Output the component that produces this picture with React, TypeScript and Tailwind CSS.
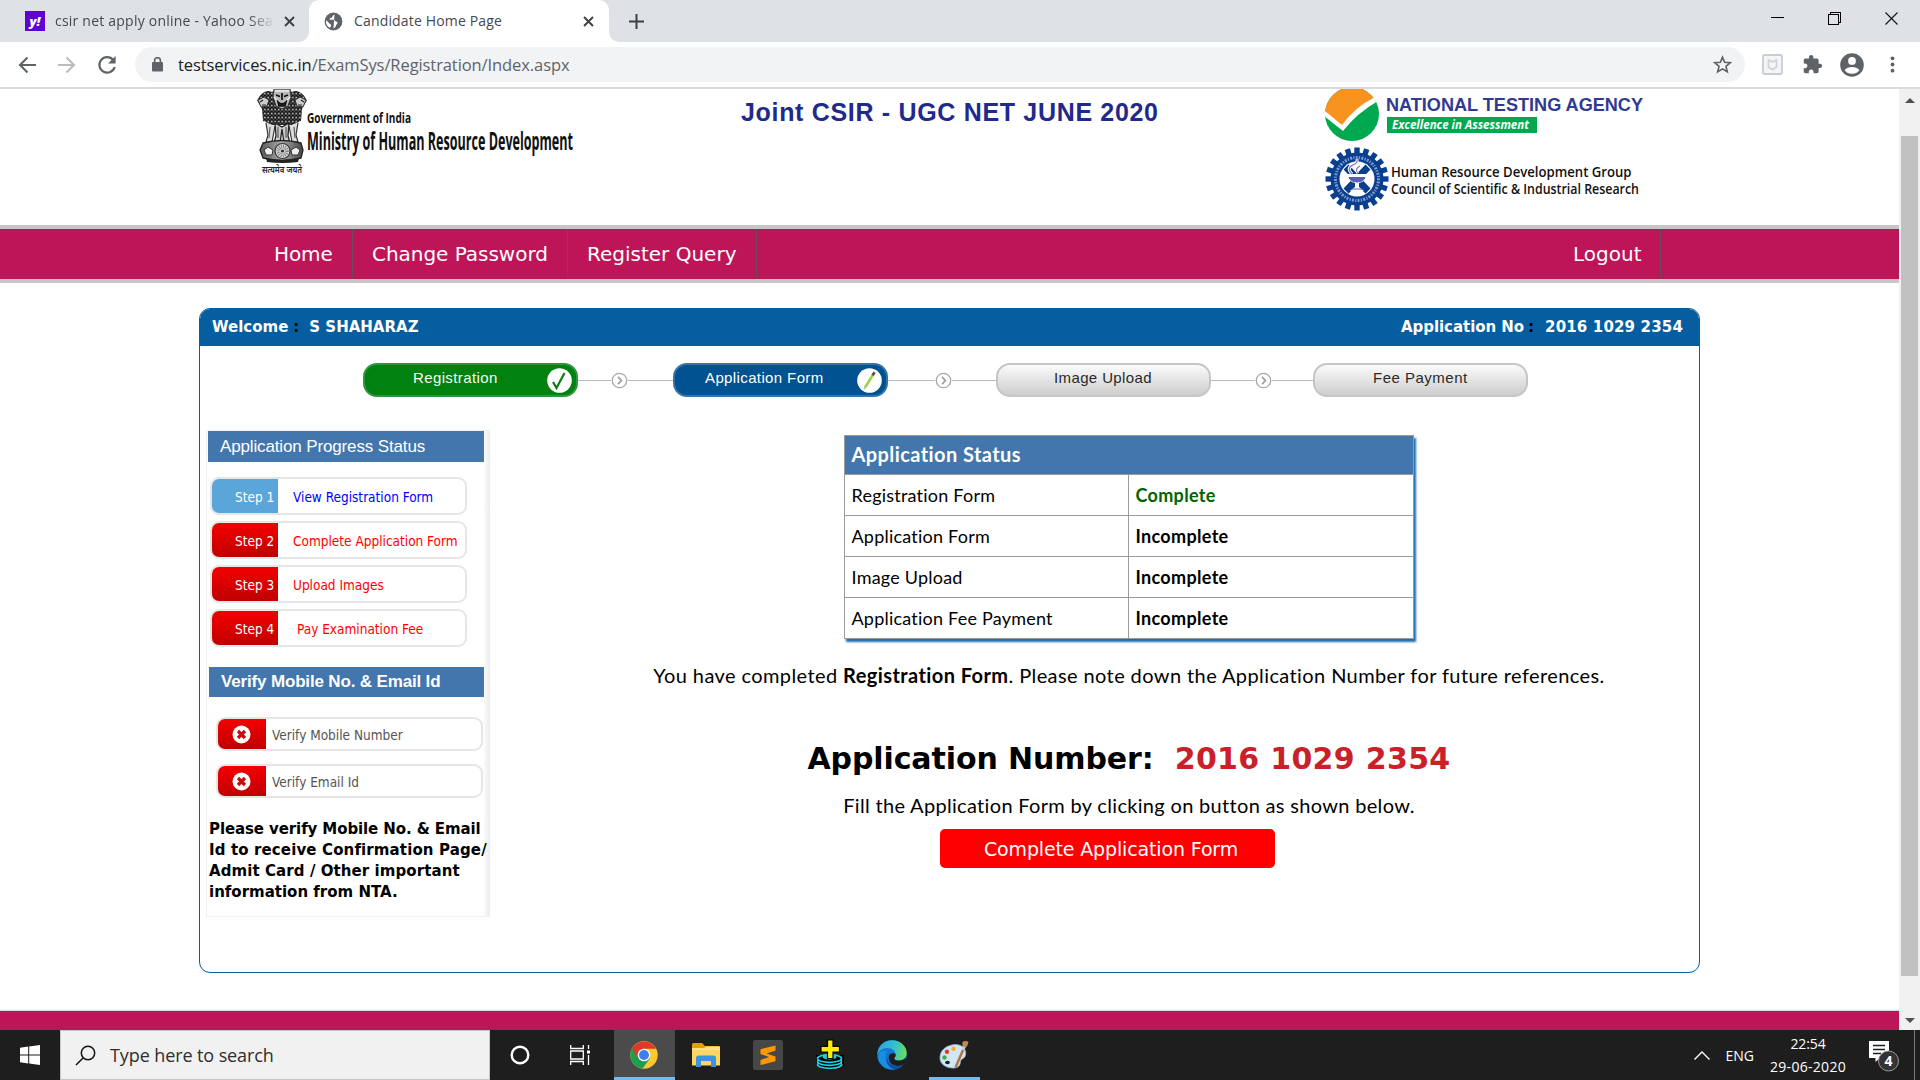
import type { ReactNode } from "react";

const UI = "font-['Open_Sans',sans-serif]";
const VERDANA = "font-['DejaVu_Sans',sans-serif]";
const TAHOMA = "font-['DejaVu_Sans_Condensed','DejaVu_Sans',sans-serif]";
const ARIAL = "font-['Liberation_Sans',sans-serif]";
const CALIBRI = "font-['Lato',sans-serif]";

/* ---------- browser chrome ---------- */

function CloseX() {
  return (
    <svg width="11" height="11" viewBox="0 0 11 11" className="shrink-0">
      <path d="M1 1l9 9M10 1l-9 9" stroke="#3c4043" strokeWidth="1.9" />
    </svg>
  );
}

function GlobeIcon() {
  return (
    <svg width="19" height="19" viewBox="0 0 19 19" className="shrink-0">
      <circle cx="9.5" cy="9.5" r="8.9" fill="#5f6368" />
      <path d="M10.500 2.300L8.600 3.900c-.5.500-.1 1.200-.7 1.600-.9.500-2 .4-2.300 1.300-.2.800.4 1.100 1.200 1h3c1.200.2.900 1.500 2 1.600 1.100.1 1.900.5 1.700 1.500-.2 1.100-1.300 1.200-1.400 2.300-.1 1.200-1.300 2.900-3.300 3.100-1.500 0-2.700-.4-3.400-.9 1.300-.3 1.700-1.200 1.600-2.200-.2-1.300-1.700-1.500-2.500-2.500L2 8.600c-.3 5 3 8 7.500 8" fill="#fff" />
      <path d="M2.300 8.200l3 3.200c.8.700 1.800 1 1.800 2 0 .9-.5 1.500-1.300 2A7.500 7.500 0 0 1 2.300 8.200z" fill="#fff" />
    </svg>
  );
}

function TabStrip() {
  return (
    <div className={`flex h-[42px] items-stretch bg-[#dee1e6] text-[14px] text-[#45494d] ${UI}`}>
      <div className="flex w-[299px] items-center pl-[25px]">
        <div className="flex h-5 w-5 items-center justify-center bg-[#5f01d1] text-[13px] font-extrabold italic leading-none text-white">
          y!
        </div>
        <div className="ml-[10px] w-[220px] overflow-hidden whitespace-nowrap pb-px [mask-image:linear-gradient(to_right,#000_88%,transparent)]">
          <span className="tracking-[0.22px]">csir net apply online - Yahoo Sear</span>
        </div>
        <span className="ml-[9px]">
          <CloseX />
        </span>
      </div>
      <div className="flex w-[10px] items-end bg-white">
        <div className="h-full w-full rounded-br-[10px] bg-[#dee1e6]" />
      </div>
      <div className="bg-[#dee1e6]">
        <div className="flex h-full w-[300px] items-center rounded-t-[10px] bg-white pl-[15px]">
          <GlobeIcon />
          <span className="ml-[11px] pb-px tracking-[0.16px]">Candidate Home Page</span>
          <span className="ml-auto mr-[15px]">
            <CloseX />
          </span>
        </div>
      </div>
      <div className="w-[10px] bg-white">
        <div className="h-full w-full rounded-bl-[10px] bg-[#dee1e6]" />
      </div>
      <div className="ml-[10px] flex items-center">
        <svg width="15" height="15" viewBox="0 0 15 15">
          <path d="M7.500 0v15M0 7.500h15" stroke="#3c4043" strokeWidth="2" />
        </svg>
      </div>
      <div className="ml-auto mr-[22px] flex items-center gap-[44px] pb-[6px]">
        <svg width="13" height="13" viewBox="0 0 13 13">
          <path d="M0 5.500h13" stroke="#000" strokeWidth="1" />
        </svg>
        <svg width="13" height="13" viewBox="0 0 13 13" shapeRendering="crispEdges">
          <path d="M.5 2.500h10v10H.5zM2.500 2V.5h10v10H11" fill="none" stroke="#000" />
        </svg>
        <svg width="13" height="13" viewBox="0 0 13 13">
          <path d="M.5.5l12 12M12.500.5l-12 12" stroke="#111" strokeWidth="1.100" />
        </svg>
      </div>
    </div>
  );
}

function Toolbar() {
  return (
    <div className="flex h-[47px] items-center border-b-2 border-[#d9dbe1] bg-white">
      <div className="flex items-center gap-[20px] pl-[17px]">
        <svg width="20" height="20" viewBox="0 0 20 20" fill="none" stroke="#5f6368" strokeWidth="2.100">
          <path d="M19 10H3M10.500 2.500L3 10l7.500 7.500" />
        </svg>
        <svg width="20" height="20" viewBox="0 0 20 20" fill="none" stroke="#babcbe" strokeWidth="2.100">
          <path d="M1 10h16M9.500 2.500L17 10l-7.500 7.500" />
        </svg>
        <svg width="20" height="20" viewBox="0 0 20 20" fill="none">
          <path d="M16.300 5A7.800 7.800 0 1 0 17.700 12" stroke="#5f6368" strokeWidth="2.200" />
          <path d="M18.600 1v7.600H11z" fill="#5f6368" />
        </svg>
      </div>
      <div className={`ml-[18px] flex h-[35px] w-[1610px] items-center rounded-full bg-[#f1f3f4] pl-[17px] text-[16.5px] ${UI}`}>
        <svg width="11" height="15" viewBox="0 0 11 15">
          <rect x="0" y="5" width="11" height="9.500" rx="1" fill="#5f6368" />
          <path d="M2.600 6V3.600a2.900 2.900 0 0 1 5.800 0V6" fill="none" stroke="#5f6368" strokeWidth="1.600" />
        </svg>
        <span className="ml-[15px] pt-px tracking-[-0.09px] text-[#202124]">
          testservices.nic.in<span className="text-[#5f6368]">/ExamSys/Registration/Index.aspx</span>
        </span>
        <svg width="19" height="19" viewBox="0 0 24 24" className="ml-auto mr-[13px]">
          <path
            d="M12 2.800l2.700 6.400 6.900.6-5.200 4.500 1.600 6.800-6-3.600-6 3.600 1.600-6.800-5.200-4.500 6.900-.6z"
            fill="none"
            stroke="#5f6368"
            strokeWidth="2.100"
          />
        </svg>
      </div>
      <svg width="21" height="21" viewBox="0 0 21 21" className="ml-[17px]">
        <rect x="1" y="1" width="19" height="19" rx="1.500" fill="#f4f5f6" stroke="#c9cdd2" strokeWidth="1.800" />
        <path d="M6.500 6l4 2 4-2v7.200l-4 2.300-4-2.300z" fill="none" stroke="#cfd3d7" strokeWidth="1.700" />
      </svg>
      <svg width="21" height="21" viewBox="0 0 24 24" className="ml-[19px]" fill="#5f6368">
        <path d="M20.500 11H19V7c0-1.100-.9-2-2-2h-4V3.500a2.500 2.500 0 0 0-5 0V5H4c-1.100 0-2 .9-2 2v3.800h1.500c1.500 0 2.700 1.200 2.700 2.700S5 16.200 3.500 16.200H2V20c0 1.100.9 2 2 2h3.800v-1.500c0-1.500 1.200-2.700 2.700-2.700s2.700 1.200 2.700 2.700V22H17c1.100 0 2-.9 2-2v-4h1.500a2.500 2.500 0 0 0 0-5z" />
      </svg>
      <svg width="24" height="24" viewBox="0 0 24 24" className="ml-[17px]">
        <circle cx="12" cy="12" r="11.800" fill="#5f6368" />
        <circle cx="12" cy="7.900" r="3.900" fill="#fff" />
        <path d="M4.600 17.300c1.500-2.400 4.600-3.400 7.400-3.400s5.900 1 7.400 3.400A9 9 0 0 1 12 20.800a9 9 0 0 1-7.400-3.500z" fill="#fff" />
      </svg>
      <svg width="5" height="17" viewBox="0 0 5 17" className="ml-[26px]" fill="#5f6368">
        <circle cx="2.500" cy="2.300" r="1.900" />
        <circle cx="2.500" cy="8.500" r="1.900" />
        <circle cx="2.500" cy="14.700" r="1.900" />
      </svg>
    </div>
  );
}

/* ---------- logos ---------- */

function Emblem() {
  return (
    <svg width="52" height="86" viewBox="0 0 52 86" className="shrink-0">
      <defs>
        <pattern id="fur" width="3.500" height="4" patternUnits="userSpaceOnUse">
          <rect width="3.500" height="4" fill="#777" />
          <path d="M0 0l1.750 3L3.500 0M0 4l1-1.500M3.500 4l-1-1.500" stroke="#111" strokeWidth=".9" fill="none" />
          <path d="M1.750 0v1.200" stroke="#eee" strokeWidth=".9" />
        </pattern>
        <linearGradient id="stone" x1="0" x2="1">
          <stop offset="0" stopColor="#555" />
          <stop offset=".5" stopColor="#aaa" />
          <stop offset="1" stopColor="#444" />
        </linearGradient>
      </defs>
      <path d="M16 3C10 0 4 5 1 12l3 4 2 4 1 12 9 4 20 0 9-4 1-12 2-4 3-4C48 5 42 0 36 3l-4-3H20z" fill="url(#fur)" />
      <path d="M2 11l6-3 5 3-2 6-6 1zM50 11l-6-3-5 3 2 6 6 1z" fill="#ccc" stroke="#333" strokeWidth="1" />
      <path d="M4 13l3-2M48 13l-3-2M6 16h4M46 16h-4" stroke="#222" strokeWidth="1.200" />
      <path d="M18 0h16l1 8-3 9-6 3-6-3-3-9z" fill="#b8b8b8" stroke="#333" strokeWidth="1" />
      <path d="M20 6l4 1.500M32 6l-4 1.500M26 4v7M22 13q4 4 8 0l-1 4h-6z" stroke="#111" strokeWidth="1.700" fill="#333" />
      <path d="M19 2h14M18 8l3 3M34 8l-3 3" stroke="#eee" strokeWidth="1.300" />
      <path d="M10 34l2 12-2 7h6l3-16M42 34l-2 12 2 7h-6l-3-16" fill="#ddd" stroke="#333" strokeWidth="1.200" />
      <path d="M19 34l1 13-2 7h6l2-14 2 14h6l-2-7 1-13-7 4z" fill="#ccc" stroke="#222" strokeWidth="1.300" />
      <path d="M22 38v11M30 38v11M14 38l-1 11M38 38l1 11" stroke="#666" strokeWidth="1.300" />
      <path d="M7 54q19-5 38 0l2 7-2 8q-19 5-38 0l-3-8z" fill="url(#stone)" stroke="#222" strokeWidth="1.300" />
      <path d="M8 61l4-3 5 3-1 5h-6zM44 61l-4-3-5 3 1 5h6z" fill="#eee" stroke="#333" />
      <circle cx="26.500" cy="62" r="7.500" fill="#ddd" stroke="#333" strokeWidth="1.200" />
      <circle cx="26.500" cy="62" r="4.200" fill="none" stroke="#777" strokeWidth="4" strokeDasharray=".8 1" />
      <circle cx="26.500" cy="62" r="1.600" fill="#333" />
      <path d="M10 69q16 4 33 0l-1 4q-15 2-31 0z" fill="#222" />
      <text x="6" y="83.500" fontSize="9" fontWeight="600" textLength="40" lengthAdjust="spacingAndGlyphs" fill="#222" fontFamily="Noto Sans, sans-serif">
        सत्यमेव जयते
      </text>
    </svg>
  );
}

function MinistryLogo() {
  return (
    <div className="flex">
      <Emblem />
      <svg width="290" height="86" viewBox="0 0 290 86" className="-ml-[2px]" fill="#111" fontFamily="Open Sans, sans-serif">
        <text x="1" y="34" fontSize="14.500" fontWeight="700" textLength="104" lengthAdjust="spacingAndGlyphs">
          Government of India
        </text>
        <text x="1" y="60.500" fontSize="25" fontWeight="700" textLength="266" lengthAdjust="spacingAndGlyphs">
          Ministry of Human Resource Development
        </text>
      </svg>
    </div>
  );
}

function NtaLogo() {
  return (
    <svg width="340" height="54" viewBox="0 0 340 54">
      <defs>
        <clipPath id="nta">
          <circle cx="27" cy="25" r="27" />
        </clipPath>
      </defs>
      <g clipPath="url(#nta)">
        <rect width="54" height="54" y="-2" fill="#00a850" />
        <path d="M-2 -4h58L48 9Q30 19 17 38L-2 24z" fill="#f7931e" />
        <path d="M0 22l17 14Q30 18 50 8l3 4Q32 24 18 42L-1 27z" fill="#fff" />
      </g>
      <text x="61" y="22.300" fontSize="18" fontWeight="700" fill="#2f3a92" textLength="257" lengthAdjust="spacingAndGlyphs" fontFamily="Liberation Sans, sans-serif">
        NATIONAL TESTING AGENCY
      </text>
      <rect x="62" y="28" width="150" height="16" fill="#00a850" />
      <text x="67" y="39.800" fontSize="12" fontWeight="700" fontStyle="italic" fill="#fff" textLength="137" lengthAdjust="spacingAndGlyphs" fontFamily="Open Sans, sans-serif">
        Excellence in Assessment
      </text>
    </svg>
  );
}

const teeth = Array.from({ length: 20 }, (_, i) => i * 18);

function CsirLogo() {
  return (
    <svg width="340" height="64" viewBox="0 0 340 64">
      <g transform="translate(32 32)">
        {teeth.map((a) => (
          <rect key={a} x="-2.700" y="-31.500" width="5.400" height="8" fill="#0a3f8f" transform={`rotate(${a})`} />
        ))}
        <circle r="26.500" fill="#0a3f8f" />
        <circle r="21.500" fill="none" stroke="#7f9acc" strokeWidth="3" strokeDasharray="1.200 1.300 2 1.200" />
        <circle r="17.500" fill="#fff" />
        <path d="M-13.500 -9.500l5-5 8.500 9 8.500-9 5 5-9 9.500 9 9.500-5 5-8.500-8-8.500 8-5-5 9-9.500z" fill="#0a3f8f" />
        <path d="M-10 -5h20q-1 8-8 9v4l5 4H-7l5-4V4q-7-1-8-9z" fill="#fff" />
        <path d="M-8 -1.500H8q-1 4-8 4.500Q-7 2.500-8-1.500zM-5 10H5" fill="#5560b5" stroke="#5560b5" />
        <path d="M-5 -5q-6-6 1-9 5-2 4-6M1 -6q-4-4 2-7" fill="none" stroke="#fff" strokeWidth="3" />
        <path d="M-5 -5q-6-6 1-9 5-2 4-6M1 -6q-4-4 2-7" fill="none" stroke="#7b6fc0" strokeWidth="1.100" />
      </g>
      <g fontFamily="Open Sans, sans-serif" fontSize="14" fontWeight="600" fill="#111">
        <text x="66" y="29.800" textLength="240.500" lengthAdjust="spacingAndGlyphs">
          Human Resource Development Group
        </text>
        <text x="66" y="47.300" textLength="248" lengthAdjust="spacingAndGlyphs">
          Council of Scientific &amp; Industrial Research
        </text>
      </g>
    </svg>
  );
}

/* ---------- page ---------- */

function SiteHeader() {
  return (
    <header className="flex h-[136px] items-start">
      <div className="ml-[256px] w-[485px]">
        <MinistryLogo />
      </div>
      <h1 className={`w-[583px] pt-[8px] text-[25px] font-bold leading-[30px] tracking-[0.68px] text-[#212a8c] ${ARIAL}`}>
        Joint CSIR - UGC NET JUNE 2020
      </h1>
      <div className="flex flex-col gap-[4px] pl-px">
        <NtaLogo />
        <CsirLogo />
      </div>
    </header>
  );
}

function NavItem({ children, className }: { children: string; className: string }) {
  return <div className={`flex items-center border-r border-[#6a4a5c] ${className}`}>{children}</div>;
}

function NavBar() {
  return (
    <nav className={`flex h-[58px] border-y-4 border-[#c6c6c6] bg-[#be1558] text-[20px] text-white ${VERDANA}`}>
      <NavItem className="w-[353px] pl-[274px] tracking-[-0.1px]">Home</NavItem>
      <NavItem className="w-[215px] pl-[19px] tracking-[-0.03px]">Change Password</NavItem>
      <NavItem className="w-[189px] pl-[19px]">Register Query</NavItem>
      <NavItem className="ml-auto mr-[238px] w-[90px] pl-[2px]">Logout</NavItem>
    </nav>
  );
}

function Connector({ left, right }: { left: string; right: string }) {
  return (
    <div className="flex items-center">
      <div className={`h-px bg-[#b9b9b9] ${left}`} />
      <svg width="17" height="17" viewBox="0 0 17 17" fill="none">
        <circle cx="8.500" cy="8.500" r="7.200" stroke="#a8a8a8" strokeWidth="1.300" />
        <path d="M7 4.800l3.400 3.700L7 12.200" stroke="#a0a0a0" strokeWidth="1.800" />
      </svg>
      <div className={`h-px bg-[#b9b9b9] ${right}`} />
    </div>
  );
}

function StepPill({ children, className, icon }: { children: string; className: string; icon?: ReactNode }) {
  return (
    <div className={`flex h-[34px] items-center rounded-[14px] ${className}`}>
      <span className="pb-[3px]">{children}</span>
      {icon}
    </div>
  );
}

function StepBar() {
  return (
    <div className={`ml-[163px] mt-[17px] flex h-[34px] text-[15px] tracking-[0.38px] ${ARIAL}`}>
      <StepPill
        className="w-[215px] border-2 border-[#2d9440] bg-[#018110] pl-[48px] text-[#f2fff2]"
        icon={
          <svg width="25" height="25" viewBox="0 0 25 25" className="ml-auto mr-[4px]">
            <circle cx="12.500" cy="12.500" r="12.300" fill="#fff" />
            <path d="M6 14l3.500 6 8-15" fill="none" stroke="#0a7d16" strokeWidth="2.200" />
          </svg>
        }
      >
        Registration
      </StepPill>
      <Connector left="w-[33px]" right="w-[45px]" />
      <StepPill
        className="w-[215px] border-2 border-[#3673a8] bg-[#005291] pl-[30px] text-white"
        icon={
          <svg width="25" height="25" viewBox="0 0 25 25" className="ml-auto mr-[4px]">
            <circle cx="12.500" cy="12.500" r="12.300" fill="#fff" />
            <path d="M8 19.500L15.500 7.500" stroke="#9bd34a" strokeWidth="2.600" />
            <path d="M15.500 7.500l2-3.200" stroke="#6b4038" strokeWidth="2.600" />
            <path d="M7 21.500l1.200-2.200" stroke="#bbb" strokeWidth="1.500" />
          </svg>
        }
      >
        Application Form
      </StepPill>
      <Connector left="w-[47px]" right="w-[44px]" />
      <StepPill className="w-[215px] border-2 border-[#c6c6c6] bg-linear-to-b from-[#fbfbfb] to-[#cecece] pl-[56px] text-[#2a2a2a]">
        Image Upload
      </StepPill>
      <Connector left="w-[44px]" right="w-[41px]" />
      <StepPill className="w-[215px] border-2 border-[#c6c6c6] bg-linear-to-b from-[#fbfbfb] to-[#cecece] pl-[58px] text-[#2a2a2a]">
        <span className="tracking-[0.5px]">Fee Payment</span>
      </StepPill>
    </div>
  );
}

function SideStep({ step, label, done, indent }: { step: string; label: string; done?: boolean; indent?: boolean }) {
  return (
    <div className="mb-[6px] flex h-[38px] w-[257px] overflow-hidden rounded-[9px] border-2 border-[#e6e6e6] bg-white">
      <div
        className={
          done
            ? "w-[66px] bg-[#5aa5da] pl-[23px] leading-[36px] text-white"
            : "w-[66px] bg-linear-to-b from-[#f40000] to-[#c00000] pl-[23px] leading-[36px] text-white"
        }
      >
        {step}
      </div>
      <div className={`whitespace-nowrap leading-[36px] ${done ? "text-[#0000ff]" : "text-[#ff0000]"} ${indent ? "pl-[19px]" : "pl-[15px]"}`}>
        {label}
      </div>
    </div>
  );
}

function VerifyRow({ label }: { label: string }) {
  return (
    <div className="mb-[13px] flex h-[34px] w-[267px] overflow-hidden rounded-[9px] border-2 border-[#e6e6e6] bg-white">
      <div className="flex w-[48px] items-center justify-center bg-linear-to-b from-[#f40000] to-[#c00000] pr-[2px]">
        <svg width="19" height="19" viewBox="0 0 19 19">
          <circle cx="9.500" cy="9.500" r="9" fill="#fff" />
          <path d="M6 6l7 7M13 6l-7 7" stroke="#c80b0b" strokeWidth="3.200" />
        </svg>
      </div>
      <span className="pl-[6px] leading-[32px] text-[#555]">{label}</span>
    </div>
  );
}

function Sidebar() {
  return (
    <aside className="flex h-[487px] w-[284px] shrink-0 border border-r-0 border-[#f0f0f0]">
      <div className={`z-10 w-[277px] shrink-0 pl-px text-[13.5px] ${TAHOMA}`}>
        <div className={`h-[31px] bg-[#4276ac] pl-[12px] text-[17px] leading-[31px] tracking-[-0.14px] text-white ${ARIAL}`}>
          Application Progress Status
        </div>
        <div className="pl-[2px] pt-[15px]">
          <SideStep step="Step 1" label="View Registration Form" done />
          <SideStep step="Step 2" label="Complete Application Form" />
          <SideStep step="Step 3" label="Upload Images" />
          <SideStep step="Step 4" label="Pay Examination Fee" indent />
        </div>
        <div className={`ml-px mt-[20px] h-[30px] bg-[#4276ac] pl-[12px] text-[17px] font-bold leading-[29px] tracking-[-0.16px] text-white ${ARIAL}`}>
          Verify Mobile No. &amp; Email Id
        </div>
        <div className="pl-[8px] pt-[20px]">
          <VerifyRow label="Verify Mobile Number" />
          <VerifyRow label="Verify Email Id" />
        </div>
        <p className={`whitespace-nowrap pl-px pt-[8px] text-[15px] font-bold leading-[21px] tracking-[0.08px] text-black ${VERDANA}`}>
          <span className="tracking-[-0.1px]">Please verify Mobile No. &amp; Email</span>
          <br />
          <span className="tracking-[0.13px]">Id to receive Confirmation Page/</span>
          <br />
          Admit Card / Other important
          <br />
          <span className="tracking-[0px]">information from NTA.</span>
        </p>
      </div>
      <div className="ml-auto w-[6px] bg-linear-to-r from-[#fafafa] to-[#ececec]" />
    </aside>
  );
}

const statusRows = [
  { name: "Registration Form", status: "Complete" },
  { name: "Application Form", status: "Incomplete" },
  { name: "Image Upload", status: "Incomplete" },
  { name: "Application Fee Payment", status: "Incomplete" },
];

function StatusTable() {
  return (
    <div className={`mr-px mt-[5px] w-[570px] border border-[#9a9a9a] text-[18px] text-black shadow-[2px_3px_2px_#1b6db0] ${CALIBRI}`}>
      <div className="h-[38px] bg-[#4276ac] pl-[7px] text-[20px] font-bold leading-[37px] tracking-[0.42px] text-white">
        Application Status
      </div>
      {statusRows.map((r) => (
        <div key={r.name} className="flex h-[41px] border-t border-[#9a9a9a] leading-[41px]">
          <div className="w-[284px] border-r border-[#9a9a9a] pl-[7px] tracking-[0.22px]">{r.name}</div>
          <div className={`pl-[7px] font-bold tracking-[0.33px] ${r.status === "Complete" ? "text-[#006400]" : ""}`}>{r.status}</div>
        </div>
      ))}
    </div>
  );
}

function MainContent() {
  return (
    <section className={`ml-[70px] flex w-[1138px] flex-col items-center text-[20px] text-black ${CALIBRI}`}>
      <StatusTable />
      <p className="mt-[21px] whitespace-nowrap leading-[30px] tracking-[0.4px]">
        You have completed <b className="tracking-[0.42px]">Registration Form</b>. Please note down the Application Number for future references.
      </p>
      <div className={`mt-[48px] whitespace-nowrap text-[30px] font-bold leading-[42px] ${VERDANA}`}>
        <span className="tracking-[-0.1px]">Application Number:</span>
        <span className="ml-[21px] tracking-[0.32px] text-[#c92127]">2016 1029 2354</span>
      </div>
      <p className="mt-[10px] whitespace-nowrap leading-[30px] tracking-[0.32px]">
        Fill the Application Form by clicking on button as shown below.
      </p>
      <button className={`mr-[43px] mt-[9px] h-[39px] w-[335px] rounded-[5px] bg-[#ff0000] pl-[7px] pt-px text-[19px] tracking-[-0.14px] text-white ${VERDANA}`}>
        Complete Application Form
      </button>
    </section>
  );
}

function Panel() {
  return (
    <div className="ml-[199px] mt-[25px] h-[665px] w-[1501px] overflow-hidden rounded-[11px] border border-[#065ea0] bg-white">
      <div className={`flex h-[37px] bg-[#065ea0] pl-[12px] pr-[16px] text-[15px] font-bold leading-[36px] text-white ${VERDANA}`}>
        <span>Welcome</span>
        <span className="ml-[5px] text-black">:</span>
        <span className="ml-[10px]">S SHAHARAZ</span>
        <span className="ml-auto tracking-[-0.05px]">Application No</span>
        <span className="ml-[4px] text-black">:</span>
        <span className="ml-[11px] tracking-[0.16px]">2016 1029 2354</span>
      </div>
      <StepBar />
      <div className="ml-[6px] mt-[33px] flex">
        <Sidebar />
        <MainContent />
      </div>
    </div>
  );
}

function Scrollbar() {
  return (
    <div className="flex w-[21px] shrink-0 flex-col items-center bg-[#f0f0f0]">
      <svg width="10" height="5" viewBox="0 0 10 5" className="mt-[9px]">
        <path d="M5 0l5 5H0z" fill="#505050" />
      </svg>
      <div className="mt-[33px] h-[840px] w-[17px] bg-[#c1c1c1]" />
      <svg width="10" height="5" viewBox="0 0 10 5" className="mt-[42px]">
        <path d="M5 5l5-5H0z" fill="#505050" />
      </svg>
    </div>
  );
}

/* ---------- taskbar ---------- */

function TaskSlot({ children, width, active, open }: { children: ReactNode; width: string; active?: boolean; open?: boolean }) {
  return (
    <div className={`flex h-[50px] shrink-0 flex-col items-center ${width} ${active ? "bg-[#4b4b4b]" : ""}`}>
      <div className={`flex h-[47px] items-center pt-[2px] ${active ? "pr-[2px]" : ""}`}>{children}</div>
      <div className={`h-[3px] ${active ? "w-full bg-[#76b9ed]" : open ? "w-[51px] bg-[#76b9ed]" : "w-0"}`} />
    </div>
  );
}

function ChromeIcon() {
  return (
    <svg width="28" height="28" viewBox="0 0 28 28">
      <circle cx="14" cy="14" r="13.700" fill="#fcc934" />
      <path d="M14 14L2.100 7.100A13.700 13.700 0 0 0 12.500 27.600L20 17.500z" fill="#1e9e50" />
      <path d="M2.100 7.100A13.700 13.700 0 0 1 26 7.800H14L8 17.400z" fill="#e0392c" />
      <circle cx="14" cy="14" r="6.300" fill="#fff" />
      <circle cx="14" cy="14" r="5" fill="#3c7ef0" />
    </svg>
  );
}

function FolderIcon() {
  return (
    <svg width="28" height="24" viewBox="0 0 28 24">
      <path d="M0 1.500Q0 0 1.500 0H10l3 3H26.500Q28 3 28 4.500V8H0z" fill="#dfa10a" />
      <path d="M0 5h28v17.500H0z" fill="#ffd663" />
      <path d="M0 5h12l2-1.500h14V7H0z" fill="#ffe08a" />
      <path d="M4 24v-9q0-2.500 2.500-2.500h15Q24 12.500 24 15v9h-5v-6H9v6z" fill="#3d94dc" />
    </svg>
  );
}

function SublimeIcon() {
  return (
    <svg width="30" height="30" viewBox="0 0 30 30">
      <rect width="30" height="30" rx="2.500" fill="#474747" />
      <path d="M22.500 5.500v5L13.500 13.500l9 3v4.800L7.500 25v-5l8.500-3-8.500-3V9.200z" fill="#ff9800" />
    </svg>
  );
}

function DiscIcon() {
  return (
    <svg width="31" height="31" viewBox="0 0 31 31">
      <path d="M1 16v10q13 9 28 2v-12z" fill="#000" />
      <path d="M19 29.500q6-1 8.500-4" stroke="#888" strokeWidth="1.500" fill="none" />
      {[25.500, 22.500, 19.500].map((y) => (
        <ellipse key={y} cx="14.500" cy={y} rx="12" ry="3.800" fill="#000" stroke="#1fd0dd" strokeWidth="1.700" />
      ))}
      <ellipse cx="14.500" cy="18" rx="7" ry="2.500" fill="#1fd0dd" />
      <path d="M12.500 1h5.500v6.500h6.500v5.500h-6.500v6.500h-5.500v-6.500H6V7.500h6.500z" fill="#ffee00" stroke="#000" strokeWidth="1.200" />
    </svg>
  );
}

function EdgeIcon() {
  return (
    <svg width="30" height="30" viewBox="0 0 30 30">
      <defs>
        <linearGradient id="edgeTop" x1="0" y1=".3" x2="1" y2=".5">
          <stop offset="0" stopColor="#2aa6e8" />
          <stop offset=".6" stopColor="#35c1c9" />
          <stop offset="1" stopColor="#6ade55" />
        </linearGradient>
      </defs>
      <circle cx="15" cy="15" r="14.700" fill="#1377cf" />
      <path d="M.4 15C.6 6 7 .3 15 .3c8.500 0 14.700 6 14.700 12.500 0 4.700-3.300 7.600-7.500 7.600-3 0-5-1-5-2 0-.8 1.500-1.200 1.500-3.600C18.700 11 15 8 10.500 8 5.500 8 1.500 11 .4 15z" fill="url(#edgeTop)" />
      <path d="M10 11.500C7 16 8 26 18.500 29.300 10 30.500 2 25 .8 17.500 1.200 12 6 9.500 10 11.500z" fill="#1a8de0" />
      <path d="M11.500 13c-3 3.500-1.500 11 6.500 13 4 .8 7.500-.8 9.500-2.500-2.500 4-6 5.800-9 6-8-1.500-11.500-9-7-16.500z" fill="#0c4fa0" />
      <path d="M18.700 14.800c0 2.400-1.500 2.800-1.500 3.600 0 1.300 2.300 2.400 5.800 2.100 2.600-.3 4.300-1.300 5.800-3v4l-2.300 3q-3 2-7.500 1.300c-5-.8-8.300-5.300-7-10.300 1-2.500 6-3 6.700-.7z" fill="#1e1e1e" />
    </svg>
  );
}

function PaintIcon() {
  return (
    <svg width="30" height="30" viewBox="0 0 30 30">
      <path d="M13 5C21 3 28 8 26.500 15c-1 4.500-4.500 3-5 6.500-.3 4.500-3 7-8.500 6.500C5 27.500.5 22.500 1 17 1.500 10.500 6 6.500 13 5z" fill="#cfe6f5" stroke="#8fb8d6" strokeWidth=".8" />
      <circle cx="5.500" cy="17.500" r="2.200" fill="#3fae49" />
      <circle cx="8" cy="11.800" r="2.200" fill="#e23b2e" />
      <circle cx="14.500" cy="8.800" r="2.200" fill="#f4b31b" />
      <ellipse cx="8.500" cy="22.500" rx="2.400" ry="1.800" fill="#1e1e1e" />
      <path d="M26 5.500L16.500 27.500" stroke="#b5713a" strokeWidth="2.400" />
      <path d="M23.500 2q3-2 6 0-.5 4-3.500 6l-2.500-1.500z" fill="#c08a55" />
      <path d="M23.500 6l3 1.500-1.500 3-2.600-1.300z" fill="#ccc" />
    </svg>
  );
}

function Taskbar() {
  return (
    <footer className={`flex h-[50px] bg-[#1e1e1e] ${UI}`}>
      <div className="flex w-[60px] items-center justify-center">
        <svg width="20" height="20" viewBox="0 0 20 20" fill="#fff">
          <path d="M0 2.800l8.200-1.200v7.900H0zM9.200 1.500L20 0v9.500H9.200zM0 10.500h8.200v7.900L0 17.200zM9.200 10.500H20V20L9.200 18.500z" />
        </svg>
      </div>
      <div className="flex w-[430px] items-center border border-[#c5c5c5] bg-[#f1f1f1] pl-[14px]">
        <svg width="21" height="21" viewBox="0 0 21 21" fill="none" stroke="#111" strokeWidth="1.500">
          <circle cx="13" cy="8" r="6.700" />
          <path d="M8.300 12.700L1 20" />
        </svg>
        <span className="ml-[14px] text-[18px] tracking-[-0.1px] text-[#2e2e2e]">Type here to search</span>
      </div>
      <div className="flex w-[124px]">
        <div className="flex w-[60px] items-center justify-center">
          <svg width="20" height="20" viewBox="0 0 20 20">
            <circle cx="10" cy="10" r="8.300" fill="none" stroke="#fff" strokeWidth="2.400" />
          </svg>
        </div>
        <div className="flex w-[60px] items-center justify-center">
          <svg width="21" height="20" viewBox="0 0 21 20" fill="none" stroke="#fff" strokeWidth="1.300">
            <path d="M.7 0v3.500h12.600V0M.7 20v-3.500h12.600V20M.7 6h12.600v8H.7zM18.500 0v4M18.500 10v10" />
            <path d="M17 5.500h3v3h-3z" fill="#fff" stroke="none" />
          </svg>
        </div>
      </div>
      <TaskSlot width="w-[61px]" active>
        <ChromeIcon />
      </TaskSlot>
      <TaskSlot width="w-[62px]">
        <FolderIcon />
      </TaskSlot>
      <TaskSlot width="w-[62px]">
        <SublimeIcon />
      </TaskSlot>
      <TaskSlot width="w-[62px]">
        <DiscIcon />
      </TaskSlot>
      <TaskSlot width="w-[62px]">
        <EdgeIcon />
      </TaskSlot>
      <TaskSlot width="w-[62px]" open>
        <PaintIcon />
      </TaskSlot>
      <div className="ml-auto flex items-center text-[14px] text-white">
        <svg width="16" height="9" viewBox="0 0 16 9" fill="none" stroke="#fff" strokeWidth="1.400">
          <path d="M.5 8.500L8 1l7.500 7.500" />
        </svg>
        <span className="ml-[16px]">ENG</span>
        <div className="ml-[15px] flex w-[78px] flex-col items-center leading-[23px]">
          <span className="tracking-[-0.1px]">22:54</span>
          <span className="tracking-[0.3px]">29-06-2020</span>
        </div>
        <svg width="32" height="32" viewBox="0 0 32 32" className="ml-[21px] mt-[2px]">
          <path d="M1 1h20v17H12l-4.500 4v-4H1z" fill="#fff" />
          <path d="M5 5.500h12M5 9.500h12M5 13.500h8" stroke="#1e1e1e" strokeWidth="1.300" />
          <circle cx="20.500" cy="21" r="10" fill="#333" stroke="#999" />
          <text x="20.500" y="26" textAnchor="middle" fontSize="14" fontWeight="700" fill="#fff" fontFamily="Open Sans, sans-serif">
            4
          </text>
        </svg>
        <div className="ml-[14px] mr-[5px] h-[50px] w-px bg-[#777]" />
      </div>
    </footer>
  );
}

export default function App() {
  return (
    <div className="flex h-[1080px] w-[1920px] flex-col overflow-hidden bg-white">
      <TabStrip />
      <Toolbar />
      <div className="flex h-[941px]">
        <main className="flex w-[1899px] flex-col">
          <SiteHeader />
          <NavBar />
          <Panel />
          <div className="mt-auto h-[20px] border-t border-[#d8d8d8] bg-[#be1558]" />
        </main>
        <Scrollbar />
      </div>
      <Taskbar />
    </div>
  );
}
